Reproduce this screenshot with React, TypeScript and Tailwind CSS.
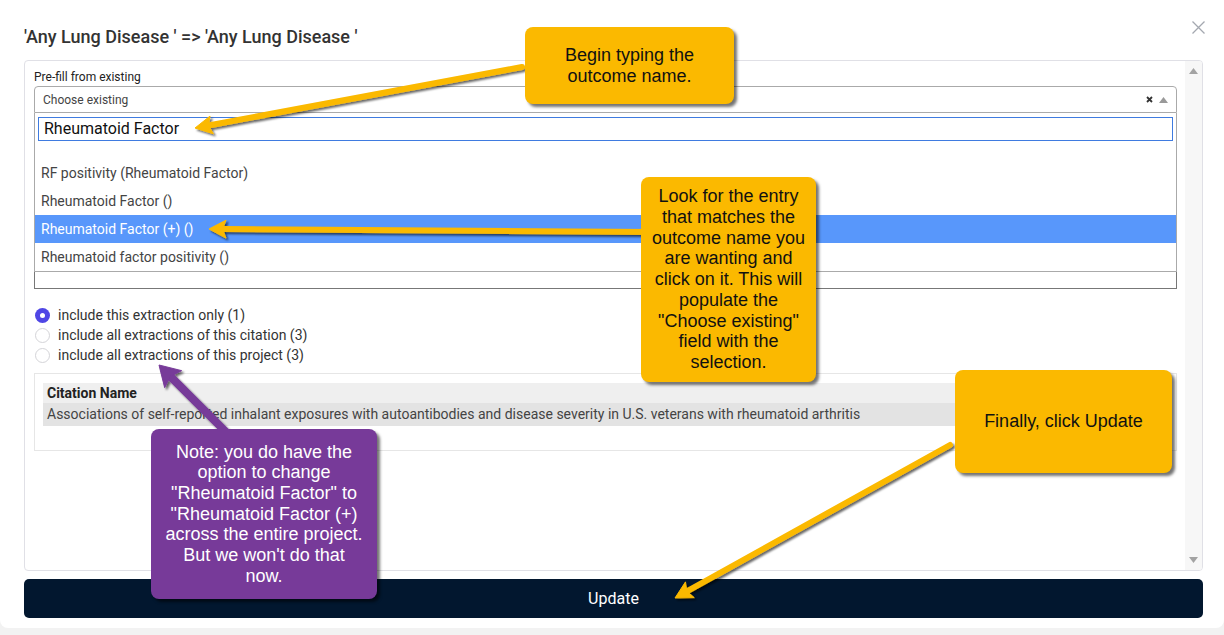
import React from 'react';

type Pt = [number, number];

interface ArrowProps {
  from: Pt;
  to: Pt;
  color: string;
  width: number;
  head: number;
  half: number;
}

// straight arrow with a pointed head, drawn tail -> tip
const Arrow: React.FC<ArrowProps> = ({ from, to, color, width, head, half }) => {
  const dx = to[0] - from[0];
  const dy = to[1] - from[1];
  const len = Math.hypot(dx, dy);
  const ux = dx / len;
  const uy = dy / len;
  const nx = -uy;
  const ny = ux;
  const bx = to[0] - ux * head;
  const by = to[1] - uy * head;
  const kx = to[0] - ux * head * 0.8;
  const ky = to[1] - uy * head * 0.8;
  const pts = [
    [to[0], to[1]],
    [bx + nx * half, by + ny * half],
    [kx, ky],
    [bx - nx * half, by - ny * half],
  ]
    .map((p) => p.join(','))
    .join(' ');
  return (
    <g filter="url(#drop)">
      <line x1={from[0]} y1={from[1]} x2={kx} y2={ky} stroke={color} strokeWidth={width} strokeLinecap="round" />
      <polygon points={pts} fill={color} stroke={color} strokeWidth={1} strokeLinejoin="round" />
    </g>
  );
};

const options = [
  'RF positivity (Rheumatoid Factor)',
  'Rheumatoid Factor ()',
  'Rheumatoid Factor (+) ()',
  'Rheumatoid factor positivity ()',
];

const radios = [
  'include this extraction only (1)',
  'include all extractions of this citation (3)',
  'include all extractions of this project (3)',
];

const App: React.FC = () => {
  return (
    <div className="relative w-[1224px] h-[635px] overflow-hidden bg-[#f2f2f2] font-['Roboto',sans-serif]">
      {/* modal */}
      <div className="w-[1224px] h-[628px] bg-white rounded-b-[8px] pl-6 pr-[21px]">
        <div className="flex justify-between items-start h-[60px]">
          <h1 className="mt-[25px] text-[18px] leading-[24px] font-medium text-[#333]">
            'Any Lung Disease ' =&gt; 'Any Lung Disease '
          </h1>
          <svg className="mt-[20px] mr-[-3px]" width="15" height="15" viewBox="0 0 15 15">
            <path d="M1.5 1.5 L13.5 13.5 M13.5 1.5 L1.5 13.5" stroke="#a4a8b0" strokeWidth="1.3" fill="none" />
          </svg>
        </div>

        <div className="flex h-[511px] border border-[#e0e0e6] rounded-[4px] overflow-hidden">
          <div className="flex-1 pl-[9px] pr-[8px] pt-[9px]">
            <div className="text-[12px] leading-[14px] text-[#222] mb-[2px]">Pre-fill from existing</div>

            <div className="flex items-center justify-between h-[27px] border border-[#aaa] rounded-t-[4px] pl-[8px] pr-[8px] bg-white">
              <span className="text-[12px] text-[#444]">Choose existing</span>
              <div className="flex items-center gap-[6px]">
                <svg width="7" height="7" viewBox="0 0 7 7">
                  <path d="M1 1 L6 6 M6 1 L1 6" stroke="#333" strokeWidth="1.8" />
                </svg>
                <svg width="9" height="6" viewBox="0 0 9 6">
                  <polygon points="4.5,0 9,6 0,6" fill="#999" />
                </svg>
              </div>
            </div>

            <div className="border-x border-b border-[#aaa] bg-white">
              <div className="px-[3px] pt-[4px] h-[46px]">
                <div className="h-[24px] border border-[#3f7be0] flex items-center pl-[5px] text-[16px] text-[#111]">
                  Rheumatoid Factor
                </div>
              </div>
              {options.map((o, i) => (
                <div
                  key={o}
                  className={`h-[28px] flex items-center pl-[6px] text-[14px] ${
                    i === 2 ? 'bg-[#5897fb] text-white' : 'text-[#444]'
                  }`}
                >
                  {o}
                </div>
              ))}
            </div>
            <div className="h-[17px] border-x border-b border-[#777]"></div>

            <div className="mt-[16px] flex flex-col">
              {radios.map((r, i) => (
                <label key={r} className="h-[20px] flex items-center gap-[8px] pl-[1px] text-[14px] text-[#333]">
                  {i === 0 ? (
                    <span className="w-[15px] h-[15px] rounded-full bg-[#4f46e5] flex items-center justify-center">
                      <span className="w-[5px] h-[5px] rounded-full bg-white"></span>
                    </span>
                  ) : (
                    <span className="w-[15px] h-[15px] rounded-full border border-[#d4d4d8] bg-white"></span>
                  )}
                  {r}
                </label>
              ))}
            </div>

            <div className="mt-[8px] h-[78px] border border-[#e6e6e6] pt-[9px] px-[8px]">
              <div className="h-[20px] bg-[#efefef] flex items-center pl-[4px] text-[14px] font-bold text-[#222]">
                Citation Name
              </div>
              <div className="h-[23px] bg-[#e3e3e3] flex items-center pl-[4px] text-[14px] text-[#444]">
                Associations of self-reported inhalant exposures with autoantibodies and disease severity in U.S. veterans with rheumatoid arthritis
              </div>
            </div>
          </div>

          <div className="w-[17px] bg-[#f7f7f7] flex flex-col items-center justify-between py-[7px]">
            <svg width="9" height="6" viewBox="0 0 9 6">
              <polygon points="4.5,0 9,6 0,6" fill="#a3a3a3" />
            </svg>
            <svg width="9" height="6" viewBox="0 0 9 6">
              <polygon points="0,0 9,0 4.5,6" fill="#a3a3a3" />
            </svg>
          </div>
        </div>

        <button className="mt-[8px] w-full h-[39px] rounded-[5px] bg-[#02172f] text-white text-[16px] font-normal">
          Update
        </button>
      </div>

      {/* annotation arrows */}
      <svg className="absolute left-0 top-0 pointer-events-none" width="1224" height="635">
        <defs>
          <filter id="drop" x="-20%" y="-20%" width="140%" height="140%">
            <feDropShadow dx="2" dy="2" stdDeviation="1" floodColor="#000" floodOpacity="0.6" />
          </filter>
        </defs>
        <Arrow from={[522, 67]} to={[195, 128]} color="#fbb900" width={6} head={17} half={9} />
        <Arrow from={[650, 232]} to={[209, 229]} color="#fbb900" width={6} head={17} half={9} />
        <Arrow from={[228, 434]} to={[159, 365]} color="#773a99" width={8} head={20} half={12} />
        <Arrow from={[950, 445]} to={[675, 598]} color="#fbb900" width={6} head={17} half={9} />
      </svg>

      {/* annotation callouts */}
      <div className="absolute left-[525px] top-[27px] w-[209px] h-[77px] flex items-center justify-center text-center rounded-[8px] bg-[#fbb900] text-[#111] shadow-[3px_3px_3px_rgba(0,0,0,0.55)] font-['Liberation_Sans',Arial,sans-serif] text-[18px] leading-[21px]">
        <p>
          Begin typing the
          <br />
          outcome name.
        </p>
      </div>

      <div className="absolute left-[641px] top-[177px] w-[175px] h-[205px] flex items-center justify-center text-center rounded-[8px] bg-[#fbb900] text-[#111] shadow-[3px_3px_3px_rgba(0,0,0,0.55)] font-['Liberation_Sans',Arial,sans-serif] text-[18px] leading-[20.7px]">
        <p>
          Look for the entry
          <br />
          that matches the
          <br />
          outcome name you
          <br />
          are wanting and
          <br />
          click on it. This will
          <br />
          populate the
          <br />
          "Choose existing"
          <br />
          field with the
          <br />
          selection.
        </p>
      </div>

      <div className="absolute left-[151px] top-[429px] w-[226px] h-[170px] flex items-center justify-center text-center rounded-[8px] bg-[#773a99] text-white shadow-[3px_3px_3px_rgba(0,0,0,0.55)] font-['Liberation_Sans',Arial,sans-serif] text-[18px] leading-[20.7px]">
        <p>
          Note: you do have the
          <br />
          option to change
          <br />
          "Rheumatoid Factor" to
          <br />
          "Rheumatoid Factor (+)
          <br />
          across the entire project.
          <br />
          But we won't do that
          <br />
          now.
        </p>
      </div>

      <div className="absolute left-[955px] top-[370px] w-[217px] h-[103px] flex items-center justify-center text-center rounded-[8px] bg-[#fbb900] text-[#111] shadow-[3px_3px_3px_rgba(0,0,0,0.55)] font-['Liberation_Sans',Arial,sans-serif] text-[18px] leading-[21px]">
        <p>Finally, click Update</p>
      </div>
    </div>
  );
};

export default App;
